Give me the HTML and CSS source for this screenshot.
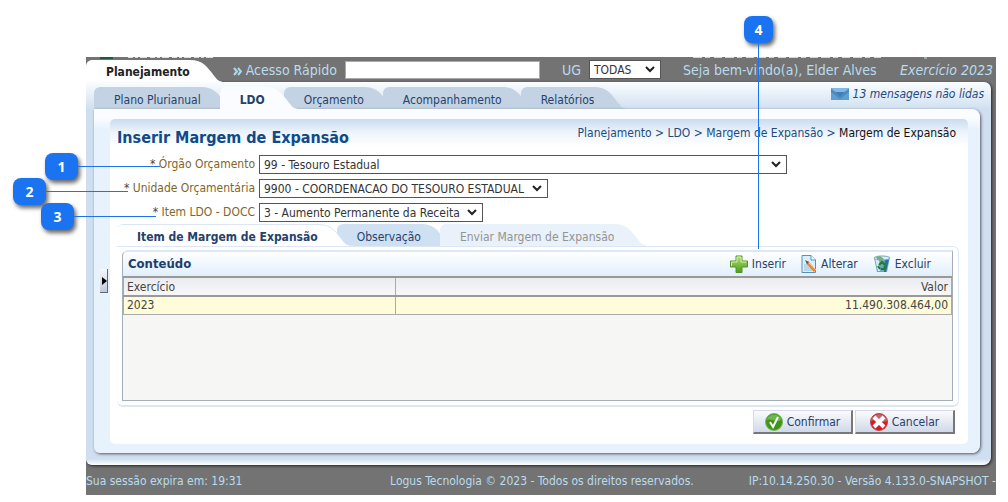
FILE: index.html
```html
<!DOCTYPE html>
<html lang="pt-BR">
<head>
    <meta charset="UTF-8">
    <meta name="viewport" content="width=device-width, initial-scale=1.0">
    <title>Inserir Margem de Expansão</title>
    <link rel="stylesheet" href="styles.css">
</head>
<body>
    <div class="app">
        <!-- lower edge of the banner scrolled out above the top bar -->
        <svg class="banner-left" width="130" height="3" viewBox="0 0 130 3"><path stroke="#1d5b3f" stroke-width="2" d="M14 1H27"/><path stroke="#d5dde0" stroke-dasharray="5 2 3 2 7 3" d="M42 .5H132"/></svg>
        <svg class="banner-right" width="240" height="3" viewBox="0 0 240 3"><path stroke="#b9dcee" stroke-width="2" stroke-dasharray="9 3 5 4 8 3" d="M0 0H188"/><path stroke="#b9dcee" d="M231 1H234"/></svg>
        <header class="topbar">
            <a class="tab tab-module" href="#"><span class="tab-label">Planejamento</span><svg class="tab-edge" viewBox="0 0 35 22" preserveAspectRatio="none"><path d="M0 0C13 0 17 7 22 13C27 20 29 22 35 22H0Z"/></svg></a>
            <div class="quick">
                <svg class="chevrons" width="9" height="9" viewBox="0 0 9 9"><path d="M1 1L4 4.500L1 8M5 1L8 4.500L5 8"/></svg>
                <label for="quick-access">Acesso Rápido</label>
                <input type="text" id="quick-access">
            </div>
            <div class="ug">
                <label for="ug">UG</label>
                <select id="ug"><option>TODAS</option></select>
            </div>
            <span class="welcome">Seja bem-vindo(a), Elder Alves</span>
            <em class="year">Exercício 2023</em>
        </header>

        <main class="shell">
            <div class="menu">
                <nav class="tabs">
                    <a class="tab" href="#"><span class="tab-label">Plano Plurianual</span><svg class="tab-edge" viewBox="0 0 35 22" preserveAspectRatio="none"><path d="M0 0C13 0 17 7 22 13C27 20 29 22 35 22H0Z"/></svg></a>
                    <a class="tab active" href="#"><span class="tab-label">LDO</span><svg class="tab-edge" viewBox="0 0 35 22" preserveAspectRatio="none"><path d="M0 0C13 0 17 7 22 13C27 20 29 22 35 22H0Z"/></svg></a>
                    <a class="tab" href="#"><span class="tab-label">Orçamento</span><svg class="tab-edge" viewBox="0 0 35 22" preserveAspectRatio="none"><path d="M0 0C13 0 17 7 22 13C27 20 29 22 35 22H0Z"/></svg></a>
                    <a class="tab" href="#"><span class="tab-label">Acompanhamento</span><svg class="tab-edge" viewBox="0 0 35 22" preserveAspectRatio="none"><path d="M0 0C13 0 17 7 22 13C27 20 29 22 35 22H0Z"/></svg></a>
                    <a class="tab" href="#"><span class="tab-label">Relatórios</span><svg class="tab-edge" viewBox="0 0 35 22" preserveAspectRatio="none"><path d="M0 0C13 0 17 7 22 13C27 20 29 22 35 22H0Z"/></svg></a>
                </nav>
                <a class="messages" href="#">
                    <svg width="18" height="12" viewBox="0 0 18 12"><path fill="#5f9fd0" d="M0 0H18V12H0Z"/><path fill="#4a8ac1" d="M0 1L9 9L18 1V4L9 11L0 4Z"/><path fill="#85b8e0" d="M0 0H18L9 7Z"/><path fill="#3f7fb7" d="M4 4H14L9 9Z"/></svg>
                    13 mensagens não lidas
                </a>
            </div>

            <div class="frame">
                <button class="collapse" aria-label="Expandir menu"><svg width="5" height="8" viewBox="0 0 5 8"><path d="M0 0L5 4L0 8Z"/></svg></button>
                <div class="content">
                    <div class="heading">
                        <h1>Inserir Margem de Expansão</h1>
                        <nav class="breadcrumb"><a href="#">Planejamento</a> &gt; <a href="#">LDO</a> &gt; <a href="#">Margem de Expansão</a> &gt; <span>Margem de Expansão</span></nav>
                    </div>

                    <form class="fields">
                        <label for="orgao"><i>*</i> Órgão Orçamento</label>
                        <select id="orgao" class="wide"><option>99 - Tesouro Estadual</option></select>
                        <label for="unidade"><i>*</i> Unidade Orçamentária</label>
                        <select id="unidade" class="medium"><option>9900 - COORDENACAO DO TESOURO ESTADUAL</option></select>
                        <label for="item"><i>*</i> Item LDO - DOCC</label>
                        <select id="item" class="small"><option>3 - Aumento Permanente da Receita</option></select>
                    </form>

                    <nav class="tabs subtabs">
                        <a class="tab active" href="#"><span class="tab-label">Item de Margem de Expansão</span><svg class="tab-edge" viewBox="0 0 35 22" preserveAspectRatio="none"><path d="M0 0C13 0 17 7 22 13C27 20 29 22 35 22H0Z"/><path class="tab-line" d="M0 .5C13 .5 17 7 22 13C27 20 29 21.500 35 21.500"/></svg></a>
                        <a class="tab" href="#"><span class="tab-label">Observação</span><svg class="tab-edge" viewBox="0 0 35 22" preserveAspectRatio="none"><path d="M0 0C13 0 17 7 22 13C27 20 29 22 35 22H0Z"/></svg></a>
                        <a class="tab disabled" href="#"><span class="tab-label">Enviar Margem de Expansão</span><svg class="tab-edge" viewBox="0 0 35 22" preserveAspectRatio="none"><path d="M0 0C13 0 17 7 22 13C27 20 29 22 35 22H0Z"/></svg></a>
                    </nav>

                    <section class="box">
                        <div class="panel">
                            <div class="panel-head">
                                <h2>Conteúdo</h2>
                                <div class="tools">
                                    <button><svg width="18" height="18" viewBox="0 0 18 18"><defs><linearGradient id="green" x2="0" y2="1"><stop stop-color="#b3dc73"/><stop offset="1" stop-color="#4d9d17"/></linearGradient></defs><path fill="url(#green)" stroke="#4f942a" d="M6 1H12V6H17.500V12H12V17.500H6V12H.5V6H6Z"/><path fill="none" stroke="#d7efac" d="M7 7V2H11V7H16.500M1.500 11V7H7"/></svg>Inserir</button>
                                    <button><svg width="16" height="18" viewBox="0 0 16 18"><path fill="#dceefa" stroke="#5691bd" d="M1 .5H10L14.500 5V17.500H1Z"/><path fill="#fff" stroke="#5691bd" d="M10 .5V5H14.500"/><path fill="#b6d7ee" d="M3 9H10L13 16H3Z"/><path stroke="#f5832a" stroke-width="3" d="M6 7L14 16"/><path stroke="#f9c38c" d="M7 7L15 15"/><path fill="#555" d="M4 5L8 7L6 9Z"/></svg>Alterar</button>
                                    <button><svg width="18" height="18" viewBox="0 0 18 18"><path fill="#6aa6c7" d="M1 3L17 2L14 17H4Z"/><path fill="#d4ebf5" d="M2 4H6L7 16H5Z"/><path fill="#2f7195" d="M12 4H16L13 17H11Z"/><ellipse cx="9" cy="3" rx="8" ry="2" fill="#d9edf5" stroke="#76a7bf"/><path fill="#7cab79" d="M3 2L7 1L11 4L8 6L4 4Z"/><path fill="none" stroke="#257b29" stroke-width="2" d="M6 10L9 7L12 10M12 11L11 14H8M7 14L5 11"/></svg>Excluir</button>
                                </div>
                            </div>
                            <table>
                                <thead>
                                    <tr><th class="col-year">Exercício</th><th class="num">Valor</th></tr>
                                </thead>
                                <tbody>
                                    <tr><td>2023</td><td class="num">11.490.308.464,00</td></tr>
                                </tbody>
                            </table>
                        </div>
                    </section>

                    <div class="actions">
                        <button><svg width="18" height="18" viewBox="0 0 18 18"><circle cx="9" cy="9" r="8.500" fill="#3f941b" stroke="#76b957"/><path fill="#72b44d" d="M2 7C3 0 15 0 16 7C12 10 6 5 2 7Z"/><path fill="none" stroke="#fff" stroke-width="2" d="M5 9L8 14L13 4"/></svg>Confirmar</button>
                        <button><svg width="18" height="18" viewBox="0 0 18 18"><circle cx="9" cy="9" r="8.500" fill="#dc1720" stroke="#b6474b"/><path fill="#c2686b" d="M1 8C2 -1 16 -1 17 8C12 11 6 5 1 8Z"/><path stroke="#fff" stroke-width="4" d="M4 4L14 14M14 4L4 14"/></svg>Cancelar</button>
                    </div>
                </div>
            </div>
        </main>

        <footer>
            <span>Sua sessão expira em: 19:31</span>
            <span class="copyright">Logus Tecnologia © 2023 - Todos os direitos reservados.</span>
            <span>IP:10.14.250.30 - Versão 4.133.0-SNAPSHOT -</span>
        </footer>
    </div>

    <!-- Numbered callouts over the form -->
    <div class="callout c1"><b>1</b></div>
    <div class="callout c2"><b>2</b></div>
    <div class="callout c3"><b>3</b></div>
    <div class="callout vertical c4"><b>4</b></div>
</body>
</html>
```

FILE: styles.css
```css
* {
    box-sizing: border-box;
}
body {
    margin: 0;
    padding: 57px 12px 7px 86px;
    position: relative;
    background: #fff;
    color: #24426b;
    font-family: "DejaVu Sans Condensed", "DejaVu Sans", sans-serif;
    font-size: 12px;
    line-height: 16px;
}
a {
    color: inherit;
    text-decoration: none;
}
svg {
    flex: none;
}
input, select, button {
    margin: 0;
    font: inherit;
    color: #333;
}
select {
    appearance: none;
    height: 19px;
    padding: 0 20px 0 4px;
    border: 1px solid #555;
    border-radius: 0;
    background: #fff url("data:image/svg+xml,%3Csvg xmlns='http://www.w3.org/2000/svg' width='10' height='7'%3E%3Cpath d='M1 1L5 5L9 1' fill='none' stroke='%23222' stroke-width='2'/%3E%3C/svg%3E") no-repeat right 5px center;
}
.app {
    position: relative;
    background: #737373;
    overflow: hidden;
}
.banner-left, .banner-right {
    position: absolute;
    top: 0;
    left: 0;
}
.banner-right {
    left: auto;
    right: 63px;
}

/* Top bar */
.topbar {
    display: flex;
    align-items: center;
    height: 25px;
    color: #b9dcee;
    font-size: 14px;
    white-space: nowrap;
}
.quick {
    display: flex;
    align-items: center;
    margin-left: 23px;
}
.chevrons {
    fill: none;
    stroke: #a5dcf5;
    stroke-width: 2;
    margin: 3px 4px 0 0;
}
.quick input {
    width: 195px;
    height: 18px;
    margin-left: 8px;
    border: 1px solid #aaa;
    background: #fff;
}
.ug {
    display: flex;
    align-items: center;
    gap: 8px;
    margin-left: 22px;
}
.ug select {
    width: 72px;
    font-size: 12px;
}
.welcome {
    margin-left: 22px;
}
.year {
    margin-left: auto;
    padding-right: 3px;
}

/* Tabs */
.tabs {
    display: flex;
    white-space: nowrap;
}
.tab {
    --fill: #c4d3e4;
    display: flex;
    height: 22px;
    margin-right: -16px;
    position: relative;
}
.tab-label {
    padding: 5px 0 0 20px;
    background: var(--fill);
    border-radius: 6px 0 0 0;
}
.tab-edge {
    width: 35px;
    height: 22px;
    fill: var(--fill);
}
.tab.active {
    --fill: #fafcff;
    z-index: 1;
    font-weight: bold;
}
.tab-module {
    --fill: #fff;
    align-self: flex-end;
    margin: 0 -15px 0 0;
    color: #222;
    font-size: 12px;
    font-weight: bold;
}
.tab-module .tab-label {
    padding-top: 4px;
}

/* Page body */
.shell {
    margin-right: 5px;
    padding: 0 11px 12px 8px;
    border-radius: 0 7px 8px 6px;
    background: linear-gradient(#fafdff, #cfdff0 28px, #cfdff0 calc(100% - 6px), #fff);
    box-shadow: 1px 1px 3px #222;
}
.menu {
    display: flex;
    justify-content: space-between;
    height: 27px;
    padding-top: 5px;
}
.messages {
    display: flex;
    align-items: center;
    gap: 4px;
    height: 16px;
    margin: -1px -4px 0 0;
    font-style: italic;
    white-space: nowrap;
    color: #234a80;
}
.frame {
    position: relative;
    padding: 10px 12px 9px 16px;
    border-radius: 0 8px 8px 6px;
    background: linear-gradient(#fafcff 9px, #e8f2fd 20px);
    box-shadow: 1px 1px 3px #556;
}
.content {
    padding: 9px 9px 10px 7px;
    border-radius: 5px;
    background: linear-gradient(#c9dcf0, #eff5fc 14px, #fff 28px);
}
.collapse {
    position: absolute;
    left: 6px;
    top: 160px;
    width: 8px;
    height: 24px;
    padding: 0 0 0 2px;
    border: 0;
    border-right: 1px solid #667;
    border-bottom: 1px solid #667;
    background: linear-gradient(#f5f7fb, #c2cbdc);
}
.collapse svg {
    display: block;
}
.heading {
    display: flex;
    justify-content: space-between;
    height: 27px;
    padding-right: 3px;
    white-space: nowrap;
}
h1 {
    margin: 0;
    color: #0f4a8a;
    font-size: 16px;
    line-height: 19px;
}
.breadcrumb {
    margin-top: -3px;
    color: #234a80;
}
.breadcrumb span {
    color: #111;
}

/* Form */
.fields {
    display: grid;
    grid-template-columns: 138px 1fr;
    grid-auto-rows: 19px;
    gap: 5px 4px;
    margin-bottom: 2px;
}
.fields label {
    color: #80661f;
    line-height: 19px;
    text-align: right;
    white-space: nowrap;
}
.fields i {
    color: #444;
    font-style: normal;
}
.wide {
    width: 528px;
}
.medium {
    width: 289px;
}
.small {
    width: 224px;
}
.subtabs .tab {
    --fill: #cfe0f3;
}
.subtabs .active {
    --fill: #fff;
}
.subtabs .active .tab-label {
    border-top: 1px solid #dce7f3;
    padding-top: 4px;
}
.tab-line {
    fill: none;
    stroke: #dce7f3;
}
.subtabs .disabled {
    --fill: #e9f1fa;
    color: #939393;
}

/* Grid panel */
.box {
    padding: 3px 5px 4px;
    border: solid #dce7f3;
    border-width: 1px 1px 2px 0;
    border-radius: 0 6px 6px 6px;
}
.panel {
    height: 151px;
    border: 1px solid #a5adb8;
    border-top: 2px solid #dce7f3;
    border-radius: 6px 0 0 0;
    background: #f6f6f5;
}
.panel-head {
    display: flex;
    align-items: center;
    justify-content: space-between;
    height: 24px;
    padding: 0 21px 0 5px;
    border-radius: 5px 0 0 0;
    background: linear-gradient(#fff, #e1effc);
}
h2 {
    margin: 0;
    font-size: 13px;
    color: #1d3f6c;
}
.tools {
    display: flex;
    gap: 15px;
}
.tools button, .actions button {
    display: flex;
    align-items: center;
    gap: 4px;
    padding: 0;
    border: 0;
    background: none;
    color: #24426b;
}
table {
    width: 100%;
    border-collapse: collapse;
    color: #444;
}
th, td {
    height: 18px;
    padding: 0 3px;
    border: 1px solid #aaa;
    font-weight: normal;
    text-align: left;
}
th {
    height: 19px;
    border-top: 2px solid #999;
    border-bottom: 2px solid #999;
    background: linear-gradient(#ebecef, #f7f7f8);
}
td {
    background: #fffcd9;
}
.col-year {
    width: 272px;
}
.num {
    text-align: right;
}
.actions {
    display: flex;
    justify-content: flex-end;
    gap: 2px;
    padding: 3px 4px 0 0;
}
.actions button {
    justify-content: center;
    width: 100px;
    height: 24px;
    border: 1px solid #d5dbe5;
    border-right: 2px solid #777;
    border-bottom: 2px solid #777;
    background: linear-gradient(#fafbfd, #d0d9e9);
}

footer {
    display: flex;
    padding: 8px 0 6px;
    color: #b9dcee;
    white-space: nowrap;
}
.copyright {
    margin: 0 55px 0 auto;
}

/* Callouts */
.callout {
    position: absolute;
    display: flex;
    align-items: center;
    width: 115px;
}
.callout b {
    width: 33px;
    height: 27px;
    border-radius: 8px;
    background: #1a73f0;
    box-shadow: 2px 3px 4px rgba(0, 0, 0, 0.6);
    color: #fff;
    font: bold 14px/27px "Open Sans", sans-serif;
    text-align: center;
}
.callout::after {
    content: "";
    flex: 1;
    height: 1px;
    background: #1a73f0;
}
.c1 {
    left: 45px;
    top: 153px;
}
.c2 {
    left: 13px;
    top: 178px;
}
.c3 {
    left: 41px;
    top: 203px;
}
.c4 {
    left: 744px;
    top: 16px;
}
.vertical {
    flex-direction: column;
    width: 29px;
    height: 233px;
}
.vertical b {
    width: 29px;
}
.vertical::after {
    width: 1px;
}
```
